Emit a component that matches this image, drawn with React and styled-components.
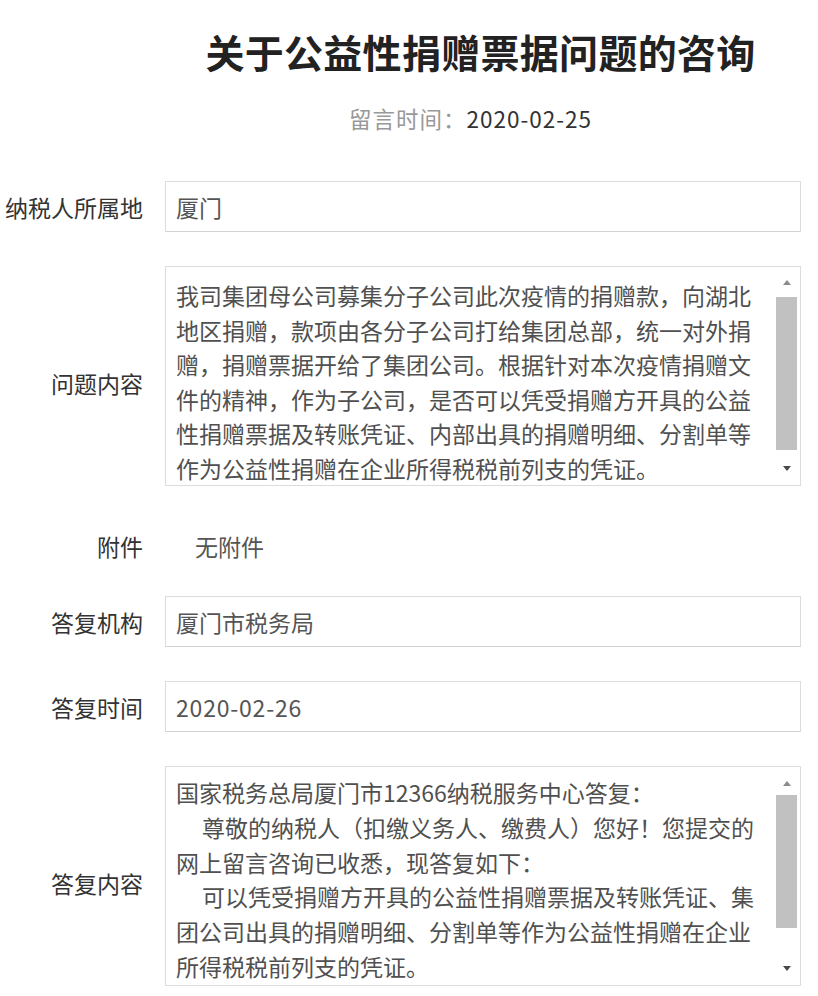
import React from "react";
import styled, { createGlobalStyle } from "styled-components";

const Global = createGlobalStyle`
  html, body { margin: 0; padding: 0; background: #fff; }
  body {
    font-family: "Noto Sans CJK SC", "Microsoft YaHei", "Noto Sans", sans-serif;
    color: #333;
  }
`;

const Page = styled.div`
  width: 818px;
  box-sizing: border-box;
  padding: 27px 17px 20px 0;
`;

const Header = styled.header`
  margin-left: 143px;
  margin-right: -17px;
  display: flex;
  flex-direction: column;
  align-items: center;
`;

const Title = styled.h1`
  margin: 0;
  font-size: 39px;
  line-height: 48px;
  font-weight: 700;
  color: #222;
  letter-spacing: 0.3px;
`;

const Meta = styled.div`
  margin-top: 28px;
  margin-right: 20px;
  font-size: 22.5px;
  line-height: 30px;
  letter-spacing: 1px;
  color: #333;
`;

const MetaLabel = styled.span`
  color: #999;
`;

const Form = styled.div`
  margin-top: 48px;
  display: flex;
  flex-direction: column;
  gap: 34px;
`;

const Row = styled.div`
  display: grid;
  grid-template-columns: 143px 1fr;
  column-gap: 22px;
  align-items: center;
`;

const Label = styled.div`
  text-align: right;
  font-size: 23px;
  line-height: 32px;
  color: #333;
  white-space: nowrap;
  padding-top: ${(p) => p.$shift || 0}px;
`;

const Field = styled.div`
  box-sizing: border-box;
  height: 51px;
  border: 1px solid #dcdcdc;
  border-bottom-color: #d2d2d2;
  padding: 0 10px;
  display: flex;
  align-items: center;
  font-size: 23px;
  color: #555;
  letter-spacing: ${(p) => (p.$wide ? "0.8px" : "0")};
`;

const Plain = styled.div`
  padding: 10px 0 0 30px;
  font-size: 23px;
  line-height: 32px;
  color: #555;
`;

const AttachLabel = styled(Label)`
  padding-top: 10px;
`;

const TextBox = styled.div`
  box-sizing: border-box;
  height: 220px;
  border: 1px solid #dcdcdc;
  display: flex;
  overflow: hidden;
`;

const TextContent = styled.div`
  flex: 1;
  padding: ${(p) => p.$top}px 15px 0 10px;
  font-size: 23px;
  line-height: ${(p) => p.$lh}px;
  color: #505050;
  overflow: hidden;
  word-break: break-all;
`;

const Para = styled.p`
  margin: 0;
  text-indent: ${(p) => (p.$indent ? "26px" : "0")};
`;

const ScrollBar = styled.div`
  width: 21px;
  margin-right: 3px;
  display: flex;
  flex-direction: column;
  align-items: center;
  padding: ${(p) => p.$top}px 0 7px;
`;

const Arrow = styled.div`
  height: 20px;
  width: 21px;
  display: flex;
  align-items: center;
  justify-content: center;
  &::after {
    content: "";
    width: 0;
    height: 0;
    border-left: 4px solid transparent;
    border-right: 4px solid transparent;
    ${(p) =>
      p.$down
        ? "border-top: 5px solid #4a4a4a;"
        : "border-bottom: 5px solid #8a8a8a;"}
  }
`;

const Thumb = styled.div`
  width: 21px;
  margin-top: ${(p) => p.$gap}px;
  height: ${(p) => p.$h}px;
  background: #c1c1c1;
`;

const Spacer = styled.div`
  flex: 1;
`;

export default function App() {
  return (
    <Page>
      <Global />
      <Header>
        <Title>关于公益性捐赠票据问题的咨询</Title>
        <Meta>
          <MetaLabel>留言时间：</MetaLabel>2020-02-25
        </Meta>
      </Header>
      <Form>
        <Row>
          <Label>纳税人所属地</Label>
          <Field>厦门</Field>
        </Row>
        <Row>
          <Label $shift={14}>问题内容</Label>
          <TextBox>
            <TextContent $top={11} $lh={34.5}>
              <Para>
                我司集团母公司募集分子公司此次疫情的捐赠款，向湖北地区捐赠，款项由各分子公司打给集团总部，统一对外捐赠，捐赠票据开给了集团公司。根据针对本次疫情捐赠文件的精神，作为子公司，是否可以凭受捐赠方开具的公益性捐赠票据及转账凭证、内部出具的捐赠明细、分割单等作为公益性捐赠在企业所得税税前列支的凭证。
              </Para>
            </TextContent>
            <ScrollBar $top={5}>
              <Arrow />
              <Thumb $gap={5} $h={153} />
              <Spacer />
              <Arrow $down />
            </ScrollBar>
          </TextBox>
        </Row>
        <Row>
          <AttachLabel>附件</AttachLabel>
          <Plain>无附件</Plain>
        </Row>
        <Row>
          <Label>答复机构</Label>
          <Field>厦门市税务局</Field>
        </Row>
        <Row>
          <Label>答复时间</Label>
          <Field $wide>2020-02-26</Field>
        </Row>
        <Row>
          <Label $shift={14}>答复内容</Label>
          <TextBox>
            <TextContent $top={8} $lh={34.8}>
              <Para>国家税务总局厦门市12366纳税服务中心答复：</Para>
              <Para $indent>
                尊敬的纳税人（扣缴义务人、缴费人）您好！您提交的网上留言咨询已收悉，现答复如下：
              </Para>
              <Para $indent>
                可以凭受捐赠方开具的公益性捐赠票据及转账凭证、集团公司出具的捐赠明细、分割单等作为公益性捐赠在企业所得税税前列支的凭证。
              </Para>
            </TextContent>
            <ScrollBar $top={6}>
              <Arrow />
              <Thumb $gap={2} $h={133} />
              <Spacer />
              <Arrow $down />
            </ScrollBar>
          </TextBox>
        </Row>
      </Form>
    </Page>
  );
}
